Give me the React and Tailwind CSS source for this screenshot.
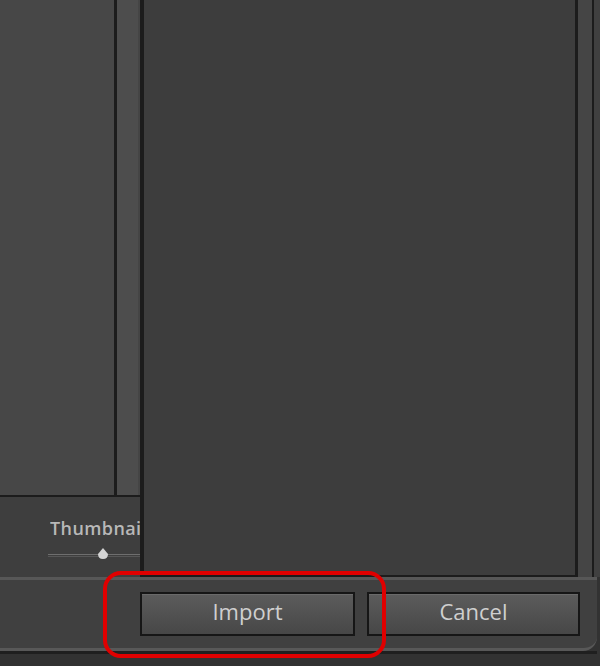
import React from "react";

const font = { fontFamily: '"Open Sans", "Liberation Sans", sans-serif' };

const DialogButton = ({ label }) => (
  <button className="h-[44px] w-full border-2 border-[#161616] bg-gradient-to-b from-[#5c5c5c] to-[#474747] pb-[5px] text-[22px] text-[#cfcfcf] shadow-[inset_0_1px_0_#6a6a6a]">
    {label}
  </button>
);

export default function App() {
  return (
    <div className="relative h-[666px] w-[600px] overflow-hidden bg-[#323232]" style={font}>
      {/* upper panels */}
      <div className="flex h-[577px]">
        <div className="flex w-[140px] flex-col">
          <div className="flex h-[495px]">
            <div className="w-[114px] bg-[#474747]" />
            <div className="w-[3px] bg-[#1c1c1c]" />
            <div className="flex-1 bg-[#4d4d4d] shadow-[inset_-2px_0_0_#454545]" />
          </div>
          <div className="h-[2px] bg-[#1c1c1c]" />
          <div className="flex flex-1 flex-col items-end overflow-hidden bg-[#3e3e3e] pt-[20px]">
            <div className="w-[90px] overflow-hidden whitespace-nowrap text-[18px] font-semibold leading-[22px] tracking-[0.4px] text-[#b8b8b8]">Thumbnail</div>
            <div className="relative mt-[11px] h-[10px] w-[92px]">
              <div className="absolute left-0 right-0 top-[4px] h-px bg-[#6e6e6e]" />
              <div className="absolute left-0 right-0 top-[6px] h-px bg-[#575757]" />
              <svg className="absolute left-[49px] top-[-2px]" width="12" height="12" viewBox="0 0 12 12">
                <path d="M6 0 L11 6 Q11 11 6 11 Q1 11 1 6 Z" fill="#d4d4d4" />
              </svg>
            </div>
          </div>
        </div>
        <div className="w-[4px] bg-[#1c1c1c]" />
        <div className="flex-1 border-b-2 border-[#1c1c1c] bg-[#3d3d3d]" />
        <div className="w-[3px] bg-[#1c1c1c]" />
        <div className="w-[14px] bg-[#454545]" />
        <div className="w-[2px] bg-[#1c1c1c]" />
        <div className="w-[6px] bg-[#404040]" />
      </div>

      {/* bottom button bar */}
      <div className="flex h-[74px] w-[597px] items-start gap-[12px] rounded-br-[14px] border-b-[3px] border-t-[3px] border-b-[#585858] border-t-[#575757] bg-[#404040] pl-[140px] pr-[17px] pt-[12px]">
        <div className="w-[215px]">
          <DialogButton label="Import" />
        </div>
        <div className="flex-1">
          <DialogButton label="Cancel" />
        </div>
      </div>
      <div className="h-[3px] w-[597px] bg-[#1f1f1f]" />

      {/* red highlight */}
      <div className="pointer-events-none absolute left-[103px] top-[571px] h-[87px] w-[283px] rounded-[18px] border-[4px] border-[#e00000]" />
    </div>
  );
}
